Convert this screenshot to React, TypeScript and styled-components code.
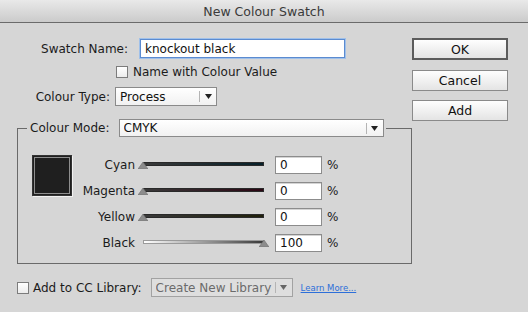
import React from 'react';
import styled, { createGlobalStyle } from 'styled-components';

const GlobalStyle = createGlobalStyle`
  html, body {
    margin: 0;
    padding: 0;
    background: #d6d6d6;
  }
  body {
    font-family: "DejaVu Sans", "Liberation Sans", sans-serif;
    font-size: 12px;
    color: #1b1b1b;
  }
`;

const Window = styled.div`
  width: 528px;
  height: 312px;
  background: #d6d6d6;
  display: flex;
  flex-direction: column;
  overflow: hidden;
`;

const TitleBar = styled.div`
  height: 23px;
  box-sizing: border-box;
  border-bottom: 1px solid #6b6b6b;
  background: linear-gradient(#e9e9e9, #cbcbcb);
  display: flex;
  align-items: center;
  justify-content: center;
  font-size: 12.5px;
  color: #3a3a3a;
`;

const Body = styled.div`
  display: flex;
  padding: 15px 0 0 17px;
`;

const LeftColumn = styled.div`
  width: 395px;
  display: flex;
  flex-direction: column;
`;

const RightColumn = styled.div`
  width: 96px;
  display: flex;
  flex-direction: column;
`;

const FieldRow = styled.div<{ $top: number; $indent?: number; $gap?: number }>`
  display: flex;
  align-items: center;
  margin-top: ${({ $top }) => $top}px;
  padding-left: ${({ $indent }) => $indent ?? 0}px;
  gap: ${({ $gap }) => $gap ?? 0}px;
`;

const Label = styled.span<{ $width?: number }>`
  width: ${({ $width }) => ($width ? `${$width}px` : 'auto')};
  text-align: right;
  white-space: nowrap;
  flex-shrink: 0;
`;

const TextInput = styled.div<{ $width: number; $height?: number; $focus?: boolean }>`
  width: ${({ $width }) => $width}px;
  height: ${({ $height }) => $height ?? 18}px;
  box-sizing: border-box;
  background: #fff;
  border: 1px solid ${({ $focus }) => ($focus ? '#5b8bd0' : '#8c8c8c')};
  box-shadow: ${({ $focus }) => ($focus ? '0 0 0 1px #9fc0ea' : 'inset 0 1px 0 #d4d4d4')};
  padding-left: 4px;
  display: flex;
  align-items: center;
  font-size: 12px;
  color: #111;
`;

const Select = styled.div<{ $width: number; $height?: number; $disabled?: boolean }>`
  width: ${({ $width }) => $width}px;
  height: ${({ $height }) => $height ?? 19}px;
  box-sizing: border-box;
  border: 1px solid ${({ $disabled }) => ($disabled ? '#a2a2a2' : '#8a8a8a')};
  background: ${({ $disabled }) => ($disabled ? '#dedede' : 'linear-gradient(#ffffff, #f1f1f1)')};
  color: ${({ $disabled }) => ($disabled ? '#6b6b6b' : '#111')};
  display: flex;
  align-items: center;
  padding-left: 4px;
  flex-shrink: 0;
`;

const SelectValue = styled.span`
  flex: 1;
  white-space: nowrap;
  overflow: hidden;
`;

const SelectDivider = styled.span`
  width: 1px;
  height: 11px;
  background: #b4b4b4;
`;

const SelectArrow = styled.span`
  width: 16px;
  display: flex;
  align-items: center;
  justify-content: center;
`;

const Check = styled.span`
  width: 12px;
  height: 12px;
  box-sizing: border-box;
  border: 1px solid #7c7c7c;
  background: linear-gradient(#ffffff, #ececec);
  flex-shrink: 0;
`;

const Group = styled.fieldset`
  margin: 13px 0 0 0;
  padding: 18px 0 11px 14px;
  border: 1px solid #6a6a6a;
  min-width: 0;
`;

const Legend = styled.legend`
  margin-left: -5px;
  padding: 0 2px 0 3px;
  display: flex;
  align-items: center;
  gap: 9px;
`;

const GroupInner = styled.div`
  display: flex;
  align-items: flex-start;
`;

const Swatch = styled.div`
  width: 40px;
  height: 41px;
  box-sizing: border-box;
  background: #1f1f1f;
  border: 1px solid #333;
  box-shadow: inset 0 0 0 1px #1f1f1f, inset 0 0 0 2px #8e8e8e, 1px 1px 0 #f2f2f2;
  flex-shrink: 0;
`;

const Sliders = styled.div`
  margin-top: 1px;
  display: flex;
  flex-direction: column;
  gap: 8px;
`;

const SliderRow = styled.div`
  display: flex;
  align-items: center;
  height: 18px;
`;

const SliderLabel = styled.span`
  width: 63px;
  text-align: right;
  white-space: nowrap;
`;

const Slider = styled.div`
  position: relative;
  width: 121px;
  height: 10px;
  margin-left: 8px;
  margin-right: 11px;
`;

const Track = styled.div<{ $tint: string; $light?: boolean }>`
  position: absolute;
  left: 0;
  right: 0;
  top: 2px;
  height: 4px;
  box-sizing: border-box;
  border: 1px solid ${({ $light }) => ($light ? '#9a9a9a' : '#2a2a2a')};
  background: ${({ $tint, $light }) =>
    $light ? 'linear-gradient(90deg, #ffffff, #3a3a3a)' : `linear-gradient(90deg, #3a3a3a, ${$tint})`};
`;

const Thumb = styled.svg<{ $atEnd?: boolean }>`
  position: absolute;
  top: 2px;
  left: ${({ $atEnd }) => ($atEnd ? '116px' : '-5px')};
`;

const Percent = styled.span`
  margin-left: 5px;
`;

const BottomRow = styled.div`
  display: flex;
  align-items: center;
  margin-top: 14px;
`;

const BottomLabel = styled.span`
  margin-left: 4px;
  margin-right: 9px;
  white-space: nowrap;
`;

const LinkText = styled.span`
  margin-left: 8px;
  font-size: 8.5px;
  color: #2d6fd9;
  text-decoration: underline;
`;

const Button = styled.div<{ $default?: boolean; $top: number }>`
  margin-top: ${({ $top }) => $top}px;
  height: ${({ $default }) => ($default ? 22 : 21)}px;
  box-sizing: border-box;
  border: ${({ $default }) => ($default ? '2px solid #5c5c5c' : '1px solid #8a8a8a')};
  background: linear-gradient(#fefefe, #e4e4e4);
  display: flex;
  align-items: center;
  justify-content: center;
  font-size: 12.5px;
  color: #111;
`;

const Arrow = ({ color = '#222' }: { color?: string }) => (
  <svg width="7" height="5" viewBox="0 0 7 5">
    <polygon points="0,0 7,0 3.5,5" fill={color} />
  </svg>
);

const Dropdown = ({ value, width, height, disabled }: { value: string; width: number; height?: number; disabled?: boolean }) => (
  <Select $width={width} $height={height} $disabled={disabled}>
    <SelectValue>{value}</SelectValue>
    <SelectDivider />
    <SelectArrow>
      <Arrow color={disabled ? '#666' : '#222'} />
    </SelectArrow>
  </Select>
);

const channels = [
  { name: 'Cyan', value: '0', tint: '#06202a' },
  { name: 'Magenta', value: '0', tint: '#2c0714' },
  { name: 'Yellow', value: '0', tint: '#20200a' },
  { name: 'Black', value: '100', tint: '#333', light: true },
];

export default function App() {
  return (
    <>
      <GlobalStyle />
      <Window>
        <TitleBar>New Colour Swatch</TitleBar>
        <Body>
          <LeftColumn>
            <FieldRow $top={1} $gap={12}>
              <Label $width={111}>Swatch Name:</Label>
              <TextInput $width={205} $height={19} $focus>
                knockout black
              </TextInput>
            </FieldRow>
            <FieldRow $top={7} $indent={99} $gap={5}>
              <Check />
              <span>Name with Colour Value</span>
            </FieldRow>
            <FieldRow $top={8} $gap={5}>
              <Label $width={93}>Colour Type:</Label>
              <Dropdown value="Process" width={102} />
            </FieldRow>
            <Group>
              <Legend>
                <span>Colour Mode:</span>
                <Dropdown value="CMYK" width={265} height={18} />
              </Legend>
              <GroupInner>
                <Swatch />
                <Sliders>
                  {channels.map((c) => (
                    <SliderRow key={c.name}>
                      <SliderLabel>{c.name}</SliderLabel>
                      <Slider>
                        <Track $tint={c.tint} $light={c.light} />
                        <Thumb $atEnd={c.light} width="10" height="7" viewBox="0 0 10 7">
                          <polygon points="0,7 5,0 10,7" fill="#8c8c8c" stroke="#6e6e6e" strokeWidth="0.6" />
                        </Thumb>
                      </Slider>
                      <TextInput $width={47}>{c.value}</TextInput>
                      <Percent>%</Percent>
                    </SliderRow>
                  ))}
                </Sliders>
              </GroupInner>
            </Group>
            <BottomRow>
              <Check />
              <BottomLabel>Add to CC Library:</BottomLabel>
              <Dropdown value="Create New Library" width={142} disabled />
              <LinkText>Learn More...</LinkText>
            </BottomRow>
          </LeftColumn>
          <RightColumn>
            <Button $default $top={0}>OK</Button>
            <Button $top={10}>Cancel</Button>
            <Button $top={9}>Add</Button>
          </RightColumn>
        </Body>
      </Window>
    </>
  );
}
